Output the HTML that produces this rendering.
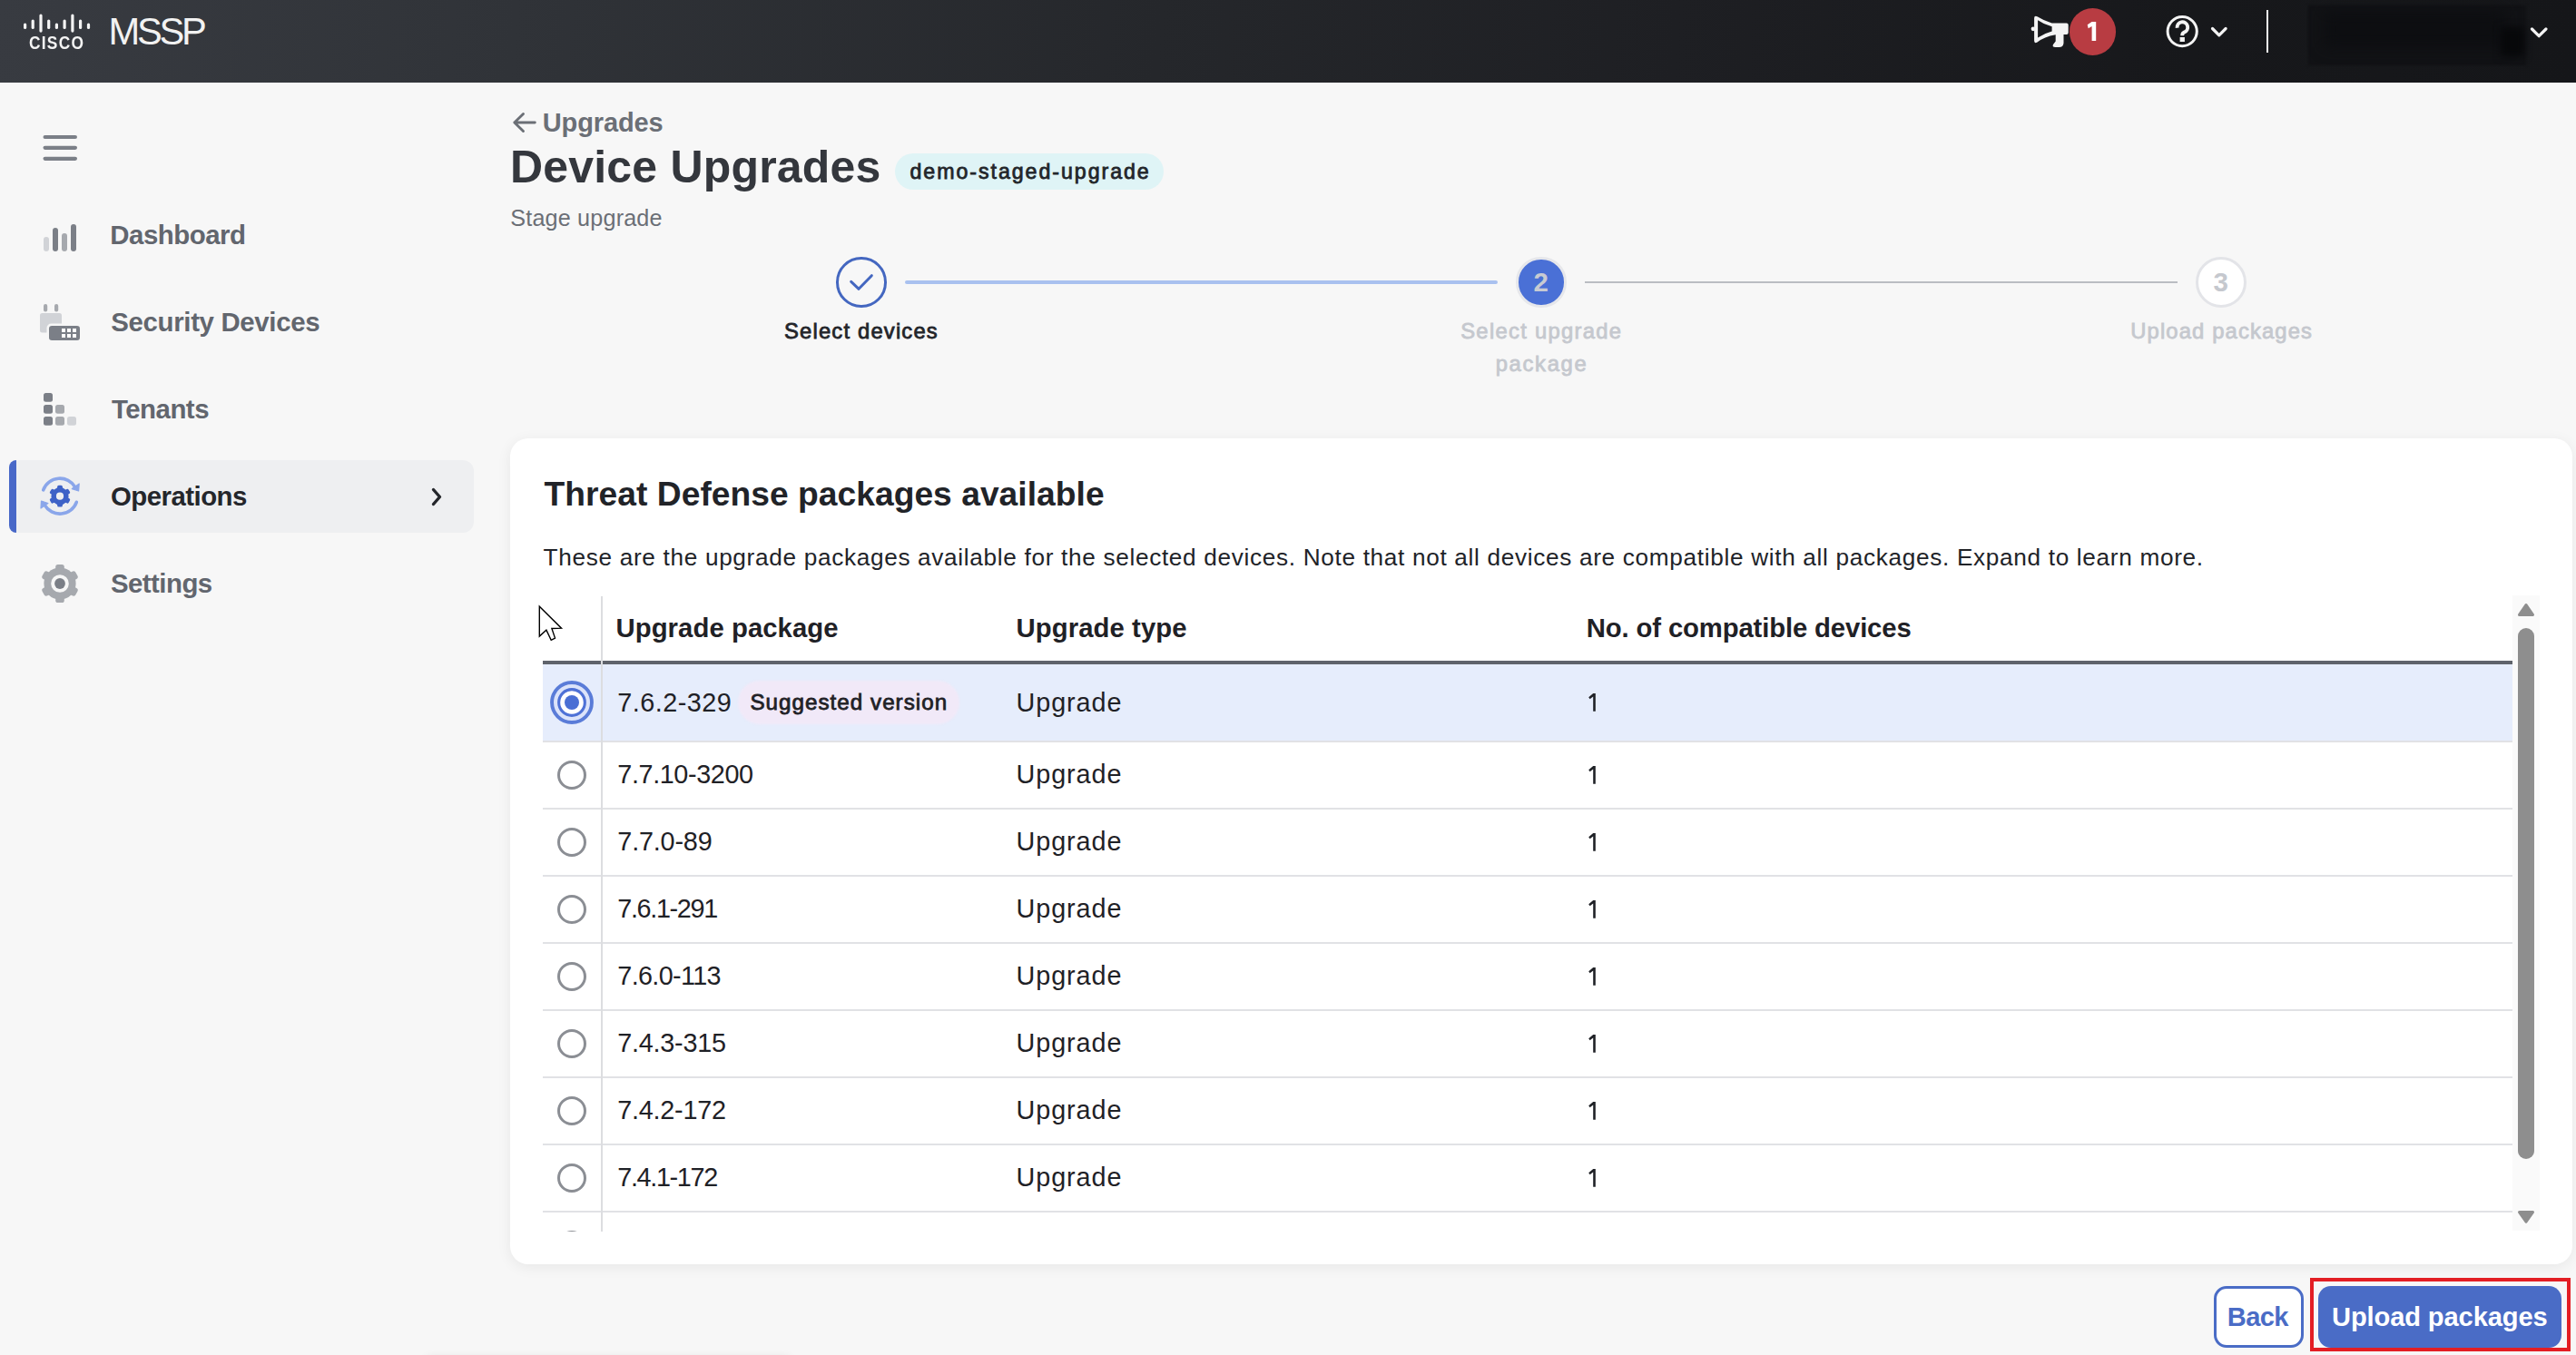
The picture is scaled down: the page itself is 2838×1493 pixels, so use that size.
<!DOCTYPE html>
<html><head><meta charset="utf-8">
<style>
*{box-sizing:border-box;margin:0;padding:0}
html,body{width:2838px;height:1493px;overflow:hidden;background:#f7f7f7;font-family:"Liberation Sans",sans-serif;position:relative}
.a{position:absolute;white-space:nowrap;line-height:1}
</style></head><body>
<div class="a" style="left:0;top:0;width:2838px;height:91px;background:linear-gradient(95deg,#383b41 0%,#303338 20%,#25272b 45%,#1e1f23 65%,#17181b 85%,#151619 100%)"></div>
<svg class="a" style="left:0;top:0" width="240" height="91"><g fill="#f4f4f4">
<rect x="26" y="25.5" width="3.2" height="6.5" rx="1.6"/><rect x="34.6" y="21.5" width="3.2" height="10.5" rx="1.6"/>
<rect x="43.4" y="15.5" width="3.2" height="20.2" rx="1.6"/><rect x="52.1" y="21.5" width="3.2" height="10.5" rx="1.6"/>
<rect x="60.8" y="25.5" width="3.2" height="6.5" rx="1.6"/><rect x="69.5" y="21.5" width="3.2" height="10.5" rx="1.6"/>
<rect x="78.3" y="15.5" width="3.2" height="20.2" rx="1.6"/><rect x="87" y="21.5" width="3.2" height="10.5" rx="1.6"/>
<rect x="95.9" y="25.5" width="3.2" height="6.5" rx="1.6"/></g></svg>
<div class="a" style="left:32.30px;top:37.75px;font-size:19.7px;font-weight:bold;color:#f4f4f4;letter-spacing:1.420px;transform:scaleX(0.88);transform-origin:0 0;">CISCO</div>
<div class="a" style="left:119.50px;top:14.46px;font-size:41.7px;font-weight:normal;color:#f2f2f2;letter-spacing:-3.267px;">MSSP</div>
<svg class="a" style="left:2230px;top:10px" width="60" height="50">
<path fill="#f4f4f4" fill-rule="evenodd" d="M11.1 10 Q11.1 6.8 14.5 8.2 Q22 12.8 30.6 15.6 L46.7 15.6 Q48.7 15.6 48.7 17.6 L48.7 26 Q48.7 28 46.7 28 L43.5 28 L43.5 37.5 Q43 42 38.5 42 L34.5 42 Q30.5 42 32 39 L34.7 35.5 L34.7 28.3 Q22 30.5 14.5 36.6 Q11.1 38.2 11.1 35 Z M15.1 12.2 L15.1 31.4 Q22 26.7 30.6 24.4 L30.6 19.2 Q22 17 15.1 12.2 Z"/>
<circle cx="10" cy="21.8" r="2.4" fill="#f4f4f4"/>
</svg>
<div class="a" style="left:2279.5px;top:9px;width:51.6px;height:51.6px;border-radius:50%;background:#b83c42"></div>
<svg class="a" style="left:2280px;top:10px" width="50" height="50"><path d="M19.7 17.3 L24.6 14 L29.2 14 L29.2 35.1 L24.6 35.1 L24.6 19 L20.7 21.3 Z" fill="#fff"/></svg>
<svg class="a" style="left:2380px;top:10px" width="80" height="50">
<circle cx="24.2" cy="24.6" r="16.1" fill="none" stroke="#f4f4f4" stroke-width="3"/>
<path d="M57.5 21.5 L64.8 28.8 L72.1 21.5" fill="none" stroke="#f4f4f4" stroke-width="3.2" stroke-linecap="round" stroke-linejoin="round"/>
</svg>
<svg class="a" style="left:2380px;top:10px" width="50" height="50"><path d="M18.6 20.8 A5.8 5.8 0 1 1 26.3 25.6 Q24.2 26.6 24.2 29.2" fill="none" stroke="#f4f4f4" stroke-width="3.9"/><rect x="21.6" y="31" width="5.3" height="5" fill="#f4f4f4"/></svg>
<div class="a" style="left:2497px;top:11px;width:2.2px;height:47px;background:#f4f4f4"></div>
<div class="a" style="left:2543px;top:6px;width:240px;height:66px;background:#111215;filter:blur(1.5px)"></div>
<div class="a" style="left:2560px;top:12px;width:200px;height:40px;background:#0d0e11;filter:blur(8px)"></div>
<div class="a" style="left:2755px;top:30px;width:26px;height:32px;background:#07080a;filter:blur(4px)"></div>
<svg class="a" style="left:2780px;top:20px" width="40" height="30">
<path d="M9.5 12 L17.2 19.7 L24.9 12" fill="none" stroke="#f4f4f4" stroke-width="3.2" stroke-linecap="round" stroke-linejoin="round"/></svg>
<svg class="a" style="left:0;top:100px" width="110" height="400">
 <g stroke="#7b7f87" stroke-width="4.2" stroke-linecap="round">
  <line x1="49.6" y1="51" x2="82.9" y2="51"/><line x1="49.6" y1="62.8" x2="82.9" y2="62.8"/><line x1="49.6" y1="74.8" x2="82.9" y2="74.8"/>
 </g>
 <rect x="48" y="161" width="6" height="16" rx="3" fill="#d1d3d7"/>
 <rect x="58" y="151" width="6" height="26" rx="3" fill="#7b7f87"/>
 <rect x="68" y="157" width="6" height="20" rx="3" fill="#a6a9ae"/>
 <rect x="78" y="147" width="6" height="30" rx="3" fill="#7b7f87"/>
 <rect x="48" y="235" width="4.2" height="8.5" rx="2.1" fill="#a6a9ae"/>
 <rect x="60" y="235" width="4.2" height="8.5" rx="2.1" fill="#a6a9ae"/>
 <rect x="44" y="245" width="24" height="21.6" rx="2.5" fill="#d1d3d7"/>
 <rect x="51.5" y="256.5" width="39" height="21" rx="5" fill="#f7f7f7"/>
 <rect x="54" y="259" width="34" height="16" rx="3.2" fill="#7b7f87"/>
 <g fill="#fff">
  <rect x="68" y="262" width="4" height="4"/><rect x="74" y="262" width="4" height="4"/><rect x="80" y="262" width="4" height="4"/>
  <rect x="68" y="268" width="4" height="4"/><rect x="74" y="268" width="4" height="4"/><rect x="80" y="268" width="4" height="4"/>
 </g>
 <rect x="48" y="333" width="10" height="9.7" rx="2.5" fill="#7b7f87"/>
 <rect x="48" y="346" width="10" height="9.7" rx="2.5" fill="#7b7f87"/>
 <rect x="48" y="359" width="10" height="9.7" rx="2.5" fill="#7b7f87"/>
 <rect x="61" y="346" width="10" height="9.7" rx="2.5" fill="#a6a9ae"/>
 <rect x="61" y="359" width="10" height="9.7" rx="2.5" fill="#a6a9ae"/>
 <rect x="74" y="359" width="10" height="9.7" rx="2.5" fill="#d1d3d7"/>
</svg>
<div class="a" style="left:10px;top:507px;width:512px;height:80px;background:#eeeff1;border-radius:12px"></div>
<div class="a" style="left:10px;top:507px;width:8px;height:80px;background:#4868c8;border-radius:8px 0 0 8px"></div>
<svg class="a" style="left:0;top:500px" width="110" height="200"><g fill="none" stroke="#8aa6ea" stroke-width="3.6" stroke-linecap="round"><path d="M47.7 39.9 A19.5 19.5 0 0 1 82.9 36.85"/><path d="M84.3 53.3 A19.5 19.5 0 0 1 49.1 56.35"/></g><path d="M79.3 38.6 L87.2 33 L86.6 41 Z" fill="#8aa6ea" stroke="#8aa6ea" stroke-width="1.2" stroke-linejoin="round"/><path d="M52.9 54.5 L45 60 L45.5 52 Z" fill="#8aa6ea" stroke="#8aa6ea" stroke-width="1.2" stroke-linejoin="round"/><g transform="translate(66 46.7)" fill="#3e62c7"><circle r="9.6"/><rect x="-2.9" y="-11.9" width="5.8" height="11.9" rx="1.62" transform="rotate(0)"/><rect x="-2.9" y="-11.9" width="5.8" height="11.9" rx="1.62" transform="rotate(60)"/><rect x="-2.9" y="-11.9" width="5.8" height="11.9" rx="1.62" transform="rotate(120)"/><rect x="-2.9" y="-11.9" width="5.8" height="11.9" rx="1.62" transform="rotate(180)"/><rect x="-2.9" y="-11.9" width="5.8" height="11.9" rx="1.62" transform="rotate(240)"/><rect x="-2.9" y="-11.9" width="5.8" height="11.9" rx="1.62" transform="rotate(300)"/></g><circle cx="66" cy="46.7" r="4.1" fill="#eeeff1"/><g transform="translate(66 143)" fill="#a6a9ae"><circle r="17.6"/><rect x="-4.8" y="-21.1" width="9.6" height="21.1" rx="2.69" transform="rotate(0)"/><rect x="-4.8" y="-21.1" width="9.6" height="21.1" rx="2.69" transform="rotate(60)"/><rect x="-4.8" y="-21.1" width="9.6" height="21.1" rx="2.69" transform="rotate(120)"/><rect x="-4.8" y="-21.1" width="9.6" height="21.1" rx="2.69" transform="rotate(180)"/><rect x="-4.8" y="-21.1" width="9.6" height="21.1" rx="2.69" transform="rotate(240)"/><rect x="-4.8" y="-21.1" width="9.6" height="21.1" rx="2.69" transform="rotate(300)"/></g><circle cx="66" cy="143" r="9.8" fill="#f7f7f7"/><circle cx="66" cy="143" r="5.9" fill="#7b7f87"/></svg>
<div class="a" style="left:121.30px;top:244.16px;font-size:29.4px;font-weight:bold;color:#62666e;letter-spacing:-0.488px;">Dashboard</div>
<div class="a" style="left:122.30px;top:339.96px;font-size:29.4px;font-weight:bold;color:#62666e;letter-spacing:-0.333px;">Security Devices</div>
<div class="a" style="left:123.00px;top:436.06px;font-size:29.4px;font-weight:bold;color:#62666e;letter-spacing:-0.500px;">Tenants</div>
<div class="a" style="left:122.00px;top:532.36px;font-size:29.4px;font-weight:bold;color:#24262b;letter-spacing:-0.533px;">Operations</div>
<div class="a" style="left:122.00px;top:627.76px;font-size:29.4px;font-weight:bold;color:#62666e;letter-spacing:-0.543px;">Settings</div>
<svg class="a" style="left:470px;top:535px" width="25" height="25">
<path d="M7.5 4.5 L14.5 12.5 L7.5 20.5" fill="none" stroke="#24262b" stroke-width="3.4" stroke-linecap="round" stroke-linejoin="round"/></svg>
<svg class="a" style="left:560px;top:120px" width="35" height="30">
<path d="M16.5 5.5 L6.8 15 L16.5 24.5 M6.8 15 L29.3 15" fill="none" stroke="#6b6f76" stroke-width="2.9" stroke-linecap="round" stroke-linejoin="round"/></svg>
<div class="a" style="left:597.80px;top:121.40px;font-size:29px;font-weight:bold;color:#6b6f76;letter-spacing:-0.129px;">Upgrades</div>
<div class="a" style="left:562.00px;top:159.15px;font-size:50px;font-weight:bold;color:#34373d;letter-spacing:0.186px;">Device Upgrades</div>
<div class="a" style="left:986px;top:169px;width:296px;height:40px;background:#dff4f6;border-radius:20px"></div>
<div class="a" style="left:1002.50px;top:178.20px;font-size:23.2px;font-weight:normal;color:#22252a;letter-spacing:1.950px;-webkit-text-stroke:0.8px #22252a;">demo-staged-upgrade</div>
<div class="a" style="left:562.30px;top:227.71px;font-size:25.2px;font-weight:normal;color:#6b6f76;letter-spacing:0.167px;">Stage upgrade</div>
<div class="a" style="left:997px;top:309px;width:653px;height:3.8px;background:#a9c1ef;border-radius:2px"></div>
<div class="a" style="left:1746px;top:310px;width:653px;height:2px;background:#babdc2"></div>
<div class="a" style="left:921px;top:283px;width:55.7px;height:55.7px;border:3.5px solid #4467c0;border-radius:50%"></div>
<svg class="a" style="left:921px;top:283px" width="56" height="56">
<path d="M16.7 27.3 L25.1 35.3 L39.3 20.7" fill="none" stroke="#4467c0" stroke-width="3" stroke-linecap="round" stroke-linejoin="round"/></svg>
<div class="a" style="left:1670.3px;top:283.3px;width:55.3px;height:55.3px;border:3.7px solid #e6e7eb;border-radius:50%;background:#4a70d6"></div>
<div class="a" style="left:1689.50px;top:296.17px;font-size:29.5px;font-weight:bold;color:#c8cbd2;letter-spacing:0.000px;">2</div>
<div class="a" style="left:2419px;top:283px;width:56px;height:56px;border:3.5px solid #e3e4e8;border-radius:50%;background:#fff"></div>
<div class="a" style="left:2438.50px;top:296.07px;font-size:29.5px;font-weight:bold;color:#c5c8ce;letter-spacing:0.000px;">3</div>
<div class="a" style="left:864.00px;top:353.19px;font-size:23.8px;font-weight:normal;color:#23252a;letter-spacing:1.177px;-webkit-text-stroke:0.8px #23252a;">Select devices</div>
<div class="a" style="left:1609.20px;top:353.19px;font-size:23.8px;font-weight:normal;color:#c5c8ce;letter-spacing:1.292px;-webkit-text-stroke:0.8px #c5c8ce;">Select upgrade</div>
<div class="a" style="left:1647.70px;top:389.39px;font-size:23.8px;font-weight:normal;color:#c5c8ce;letter-spacing:1.683px;-webkit-text-stroke:0.8px #c5c8ce;">package</div>
<div class="a" style="left:2347.20px;top:353.19px;font-size:23.8px;font-weight:normal;color:#c5c8ce;letter-spacing:1.136px;-webkit-text-stroke:0.8px #c5c8ce;">Upload packages</div>
<div class="a" style="left:562px;top:483px;width:2272px;height:910px;background:#fff;border-radius:20px;box-shadow:0 3px 16px rgba(0,0,0,0.065)"></div>
<div class="a" style="left:599.60px;top:525.77px;font-size:37.2px;font-weight:bold;color:#212328;letter-spacing:0.031px;">Threat Defense packages available</div>
<div class="a" style="left:598.60px;top:600.86px;font-size:26.2px;font-weight:normal;color:#212328;letter-spacing:0.674px;">These are the upgrade packages available for the selected devices. Note that not all devices are compatible with all packages. Expand to learn more.</div>
<div class="a" style="left:598px;top:657px;width:2170px;height:700px;overflow:hidden">
<div class="a" style="left:80.50px;top:20.24px;font-size:29.3px;font-weight:bold;color:#1f2126;letter-spacing:0.057px;">Upgrade package</div>
<div class="a" style="left:521.60px;top:20.24px;font-size:29.3px;font-weight:bold;color:#1f2126;letter-spacing:0.064px;">Upgrade type</div>
<div class="a" style="left:1149.80px;top:20.24px;font-size:29.3px;font-weight:bold;color:#1f2126;letter-spacing:-0.146px;">No. of compatible devices</div>
<div class="a" style="left:0;top:71px;width:2170px;height:4px;background:#5f636b"></div>
<div class="a" style="left:0;top:75px;width:2170px;height:84px;background:#e6edfc"></div>
<div class="a" style="left:0;top:159px;width:2170px;height:2px;background:#e1e2e5"></div>
<svg class="a" style="left:8px;top:93px" width="48" height="48"><circle cx="24" cy="24" r="21.95" fill="#dbe3fa" stroke="#5a7cd8" stroke-width="3.9"/><circle cx="24" cy="24" r="14.35" fill="#fff" stroke="#4e71d6" stroke-width="3.1"/><circle cx="24" cy="24" r="8" fill="#4a6fd4"/></svg>
<div class="a" style="left:82.30px;top:102.66px;font-size:28.8px;font-weight:normal;color:#1f2126;letter-spacing:0.463px;">7.6.2-329</div>
<div class="a" style="left:215px;top:93px;width:244px;height:48px;background:#f1e9f8;border-radius:24px;filter:blur(1.2px)"></div>
<div class="a" style="left:228.40px;top:105.35px;font-size:24.2px;font-weight:normal;color:#1f2126;letter-spacing:1.025px;-webkit-text-stroke:0.8px #1f2126;">Suggested version</div>
<div class="a" style="left:521.60px;top:102.66px;font-size:28.8px;font-weight:normal;color:#1f2126;letter-spacing:0.900px;">Upgrade</div>
<svg class="a" style="left:1151px;top:106.00px" width="12" height="22"><path d="M1.2 5.2 L6.2 1 L8.8 1 L8.8 20.7 L6.2 20.7 L6.2 4.6 L2.6 7.3 Z" fill="#1f2126"/></svg>
<div class="a" style="left:0;top:233px;width:2170px;height:2px;background:#e1e2e5"></div>
<div class="a" style="left:16px;top:181px;width:32px;height:32px;border:3px solid #8b8e94;border-radius:50%;background:#fff"></div>
<div class="a" style="left:82.30px;top:181.86px;font-size:28.8px;font-weight:normal;color:#1f2126;letter-spacing:-0.400px;">7.7.10-3200</div>
<div class="a" style="left:521.60px;top:181.86px;font-size:28.8px;font-weight:normal;color:#1f2126;letter-spacing:0.900px;">Upgrade</div>
<svg class="a" style="left:1151px;top:185.50px" width="12" height="22"><path d="M1.2 5.2 L6.2 1 L8.8 1 L8.8 20.7 L6.2 20.7 L6.2 4.6 L2.6 7.3 Z" fill="#1f2126"/></svg>
<div class="a" style="left:0;top:307px;width:2170px;height:2px;background:#e1e2e5"></div>
<div class="a" style="left:16px;top:255px;width:32px;height:32px;border:3px solid #8b8e94;border-radius:50%;background:#fff"></div>
<div class="a" style="left:82.30px;top:255.86px;font-size:28.8px;font-weight:normal;color:#1f2126;letter-spacing:-0.186px;">7.7.0-89</div>
<div class="a" style="left:521.60px;top:255.86px;font-size:28.8px;font-weight:normal;color:#1f2126;letter-spacing:0.900px;">Upgrade</div>
<svg class="a" style="left:1151px;top:259.50px" width="12" height="22"><path d="M1.2 5.2 L6.2 1 L8.8 1 L8.8 20.7 L6.2 20.7 L6.2 4.6 L2.6 7.3 Z" fill="#1f2126"/></svg>
<div class="a" style="left:0;top:381px;width:2170px;height:2px;background:#e1e2e5"></div>
<div class="a" style="left:16px;top:329px;width:32px;height:32px;border:3px solid #8b8e94;border-radius:50%;background:#fff"></div>
<div class="a" style="left:82.30px;top:329.86px;font-size:28.8px;font-weight:normal;color:#1f2126;letter-spacing:-1.350px;">7.6.1-291</div>
<div class="a" style="left:521.60px;top:329.86px;font-size:28.8px;font-weight:normal;color:#1f2126;letter-spacing:0.900px;">Upgrade</div>
<svg class="a" style="left:1151px;top:333.50px" width="12" height="22"><path d="M1.2 5.2 L6.2 1 L8.8 1 L8.8 20.7 L6.2 20.7 L6.2 4.6 L2.6 7.3 Z" fill="#1f2126"/></svg>
<div class="a" style="left:0;top:455px;width:2170px;height:2px;background:#e1e2e5"></div>
<div class="a" style="left:16px;top:403px;width:32px;height:32px;border:3px solid #8b8e94;border-radius:50%;background:#fff"></div>
<div class="a" style="left:82.30px;top:403.86px;font-size:28.8px;font-weight:normal;color:#1f2126;letter-spacing:-0.662px;">7.6.0-113</div>
<div class="a" style="left:521.60px;top:403.86px;font-size:28.8px;font-weight:normal;color:#1f2126;letter-spacing:0.900px;">Upgrade</div>
<svg class="a" style="left:1151px;top:407.50px" width="12" height="22"><path d="M1.2 5.2 L6.2 1 L8.8 1 L8.8 20.7 L6.2 20.7 L6.2 4.6 L2.6 7.3 Z" fill="#1f2126"/></svg>
<div class="a" style="left:0;top:529px;width:2170px;height:2px;background:#e1e2e5"></div>
<div class="a" style="left:16px;top:477px;width:32px;height:32px;border:3px solid #8b8e94;border-radius:50%;background:#fff"></div>
<div class="a" style="left:82.30px;top:477.86px;font-size:28.8px;font-weight:normal;color:#1f2126;letter-spacing:-0.250px;">7.4.3-315</div>
<div class="a" style="left:521.60px;top:477.86px;font-size:28.8px;font-weight:normal;color:#1f2126;letter-spacing:0.900px;">Upgrade</div>
<svg class="a" style="left:1151px;top:481.50px" width="12" height="22"><path d="M1.2 5.2 L6.2 1 L8.8 1 L8.8 20.7 L6.2 20.7 L6.2 4.6 L2.6 7.3 Z" fill="#1f2126"/></svg>
<div class="a" style="left:0;top:603px;width:2170px;height:2px;background:#e1e2e5"></div>
<div class="a" style="left:16px;top:551px;width:32px;height:32px;border:3px solid #8b8e94;border-radius:50%;background:#fff"></div>
<div class="a" style="left:82.30px;top:551.86px;font-size:28.8px;font-weight:normal;color:#1f2126;letter-spacing:-0.250px;">7.4.2-172</div>
<div class="a" style="left:521.60px;top:551.86px;font-size:28.8px;font-weight:normal;color:#1f2126;letter-spacing:0.900px;">Upgrade</div>
<svg class="a" style="left:1151px;top:555.50px" width="12" height="22"><path d="M1.2 5.2 L6.2 1 L8.8 1 L8.8 20.7 L6.2 20.7 L6.2 4.6 L2.6 7.3 Z" fill="#1f2126"/></svg>
<div class="a" style="left:0;top:677px;width:2170px;height:2px;background:#e1e2e5"></div>
<div class="a" style="left:16px;top:625px;width:32px;height:32px;border:3px solid #8b8e94;border-radius:50%;background:#fff"></div>
<div class="a" style="left:82.30px;top:625.86px;font-size:28.8px;font-weight:normal;color:#1f2126;letter-spacing:-1.350px;">7.4.1-172</div>
<div class="a" style="left:521.60px;top:625.86px;font-size:28.8px;font-weight:normal;color:#1f2126;letter-spacing:0.900px;">Upgrade</div>
<svg class="a" style="left:1151px;top:629.50px" width="12" height="22"><path d="M1.2 5.2 L6.2 1 L8.8 1 L8.8 20.7 L6.2 20.7 L6.2 4.6 L2.6 7.3 Z" fill="#1f2126"/></svg>
<div class="a" style="left:0;top:751px;width:2170px;height:2px;background:#e1e2e5"></div>
<div class="a" style="left:16px;top:699px;width:32px;height:32px;border:3px solid #8b8e94;border-radius:50%;background:#fff"></div>
<div class="a" style="left:64px;top:0;width:2px;height:700px;background:#dcdde0"></div>
</div>
<div class="a" style="left:2768px;top:656px;width:30px;height:700px;background:#fafafa"></div>
<svg class="a" style="left:2768px;top:656px" width="30" height="700">
<path d="M7.6 21.5 L15 10.6 L22.4 21.5 Z" fill="#8e8e8e" stroke="#8e8e8e" stroke-width="3.2" stroke-linejoin="round"/>
<rect x="6" y="36" width="18" height="585" rx="9" fill="#8e8e8e"/>
<path d="M7.6 679.6 L15 690.2 L22.4 679.6 Z" fill="#8e8e8e" stroke="#8e8e8e" stroke-width="3.2" stroke-linejoin="round"/>
</svg>
<div class="a" style="left:2439.2px;top:1417.1px;width:98.5px;height:67.6px;border:3.6px solid #4a6cc6;border-radius:14px;background:#fff"></div>
<div class="a" style="left:2453.70px;top:1437.41px;font-size:29.1px;font-weight:bold;color:#4a6cc6;letter-spacing:-0.567px;">Back</div>
<div class="a" style="left:2554px;top:1417.1px;width:268px;height:67.6px;border-radius:14px;background:#4a6cc6"></div>
<div class="a" style="left:2569.00px;top:1437.41px;font-size:29.1px;font-weight:bold;color:#ffffff;letter-spacing:-0.114px;">Upload packages</div>
<div class="a" style="left:2545.3px;top:1408.2px;width:286.7px;height:81.3px;border:4.4px solid #e31e24"></div>
<svg class="a" style="left:592px;top:666px" width="32" height="44"><path d="M2.3 2.3 L2.3 35.1 L9.9 28.2 L15.2 39.4 L19.5 37.1 L15.9 26.5 L26.5 26.2 Z" fill="#fff" stroke="#000" stroke-width="1.4" stroke-linejoin="miter"/></svg>
<div class="a" style="left:470px;top:1497px;width:400px;height:40px;box-shadow:0 0 10px rgba(0,0,0,0.12)"></div>
</body></html>
